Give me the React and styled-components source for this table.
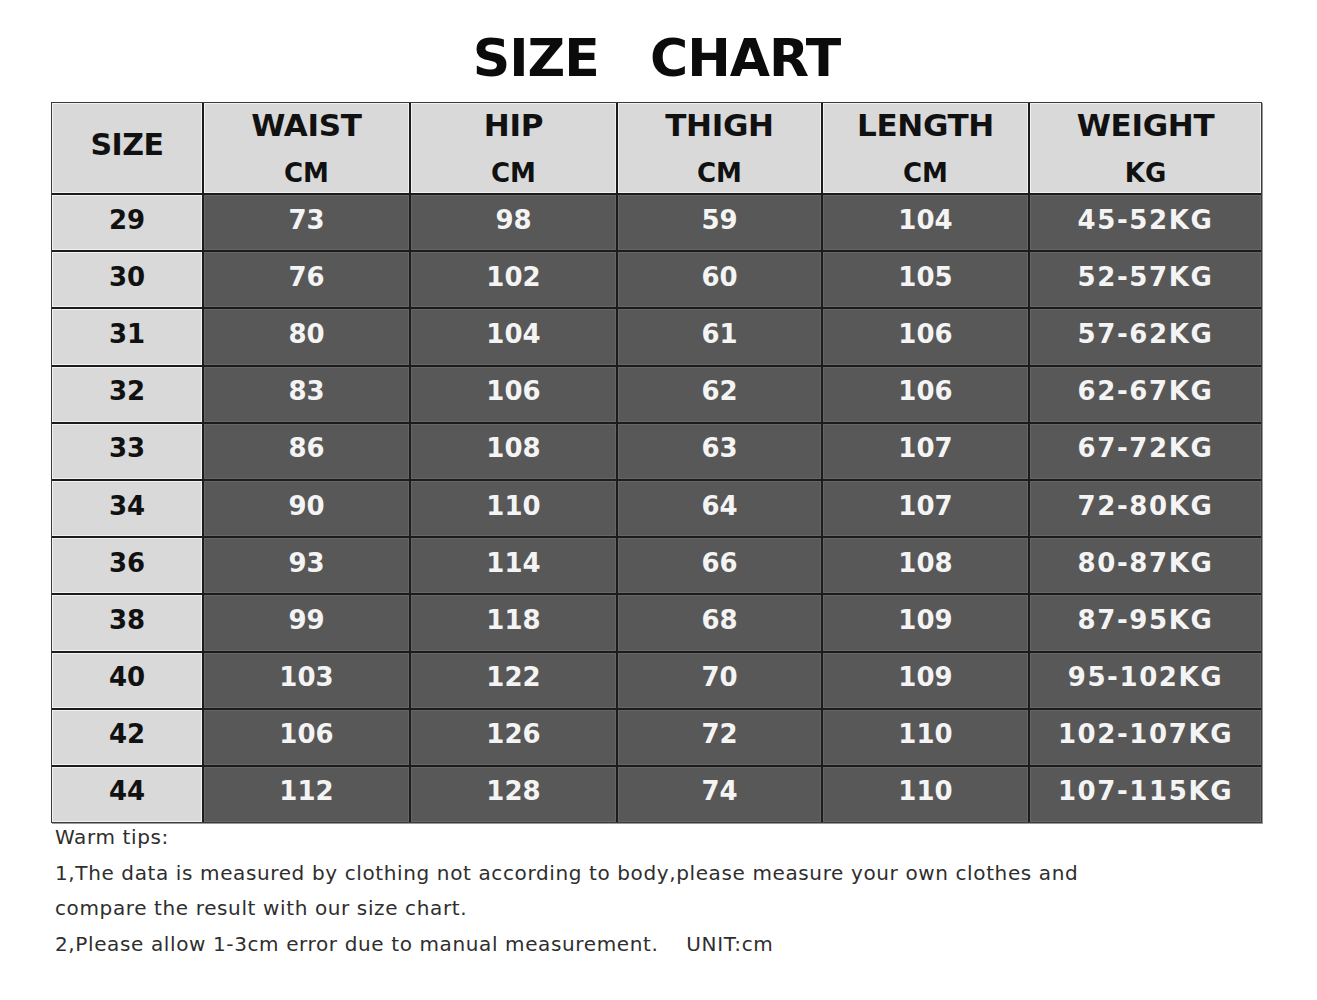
import React from "react";
import styled, { createGlobalStyle } from "styled-components";

const Global = createGlobalStyle`
  html, body { margin: 0; padding: 0; background: #ffffff; }
  body { font-family: "DejaVu Sans", Verdana, sans-serif; }
`;

const Page = styled.div`
  width: 1317px;
  height: 1000px;
  padding: 0 0 0 51px;
  box-sizing: border-box;
  display: flex;
  flex-direction: column;
`;

const Title = styled.h1`
  width: 1211px;
  margin: 0;
  height: 102px;
  display: flex;
  align-items: center;
  justify-content: center;
  padding-top: 14px;
  box-sizing: border-box;
  font-family: "DejaVu Sans", Verdana, sans-serif;
  font-weight: 700;
  font-size: 52px;
  letter-spacing: -1px;
  color: #0b0b0b;
  white-space: pre;
`;

const Table = styled.div`
  width: 1211px;
  box-sizing: border-box;
  display: grid;
  grid-template-columns: 150px 205px 205px 203px 205px 1fr;
  grid-template-rows: 90px repeat(11, 55.2px);
  gap: 2px;
  background: #1c1c1c;
  border: 1px solid #3a3a3a;
  box-shadow: 1px 1px 0 #9a9a9a;
`;

const Cell = styled.div`
  display: flex;
  flex-direction: column;
  align-items: center;
  justify-content: center;
  padding-bottom: ${(p) => (p.$head ? "0" : "6px")};
  background: ${(p) => (p.$dark ? "#585858" : "#d9d9d9")};
  color: ${(p) => (p.$dark ? "#f4f4f4" : "#111111")};
  box-shadow: inset 0 0 0 1px ${(p) => (p.$dark ? "#666666" : "#f2f2f2")};
  font-weight: 700;
  font-size: 26px;
  letter-spacing: ${(p) => (p.$wide ? "1.6px" : "0px")};
  line-height: 1;
`;

const HeadMain = styled.span`
  font-size: 31px;
  letter-spacing: -0.3px;
  line-height: 1;
`;

const HeadUnit = styled.span`
  font-size: 26px;
  margin-top: 19px;
  line-height: 1;
`;

const SizeHead = styled.span`
  font-size: 30px;
  letter-spacing: -0.5px;
  margin-bottom: 6px;
`;

const Notes = styled.div`
  padding: 0 0 0 4px;
  margin-top: -3px;
  font-family: "DejaVu Sans", Verdana, sans-serif;
  font-size: 20px;
  letter-spacing: 0.62px;
  color: #2e2e2e;
  line-height: 35.7px;
`;

const Line = styled.div`
  white-space: pre;
`;

const heads = [
  ["WAIST", "CM"],
  ["HIP", "CM"],
  ["THIGH", "CM"],
  ["LENGTH", "CM"],
  ["WEIGHT", "KG"],
];

const rows = [
  ["29", "73", "98", "59", "104", "45-52KG"],
  ["30", "76", "102", "60", "105", "52-57KG"],
  ["31", "80", "104", "61", "106", "57-62KG"],
  ["32", "83", "106", "62", "106", "62-67KG"],
  ["33", "86", "108", "63", "107", "67-72KG"],
  ["34", "90", "110", "64", "107", "72-80KG"],
  ["36", "93", "114", "66", "108", "80-87KG"],
  ["38", "99", "118", "68", "109", "87-95KG"],
  ["40", "103", "122", "70", "109", "95-102KG"],
  ["42", "106", "126", "72", "110", "102-107KG"],
  ["44", "112", "128", "74", "110", "107-115KG"],
];

export default function App() {
  return (
    <>
      <Global />
      <Page>
        <Title>{"SIZE   CHART"}</Title>
        <Table>
          <Cell $head>
            <SizeHead>SIZE</SizeHead>
          </Cell>
          {heads.map(([m, u]) => (
            <Cell key={m} $head>
              <HeadMain>{m}</HeadMain>
              <HeadUnit>{u}</HeadUnit>
            </Cell>
          ))}
          {rows.map((r) =>
            r.map((v, i) => (
              <Cell key={r[0] + "-" + i} $dark={i > 0} $wide={i === 5}>
                {v}
              </Cell>
            ))
          )}
        </Table>
        <Notes>
          <Line>Warm tips:</Line>
          <Line>
            1,The data is measured by clothing not according to body,please measure your own clothes and
          </Line>
          <Line>compare the result with our size chart.</Line>
          <Line>{"2,Please allow 1-3cm error due to manual measurement.    UNIT:cm"}</Line>
        </Notes>
      </Page>
    </>
  );
}
